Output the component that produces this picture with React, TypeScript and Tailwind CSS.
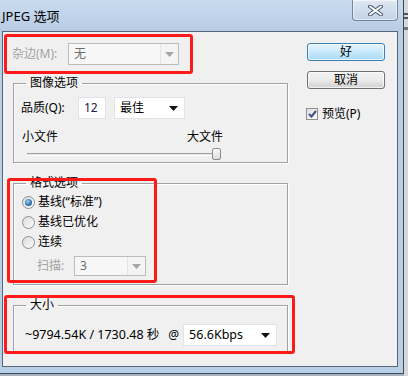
import React from "react";

const font = "font-['Noto_Sans','Noto_Sans_CJK_SC',sans-serif]";

function Arrow({ disabled }: { disabled?: boolean }) {
  return (
    <svg width="9" height="5" viewBox="0 0 9 5">
      <path d="M0 0 L9 0 L4.5 5 Z" fill={disabled ? "#a6a6a6" : "#111"} />
    </svg>
  );
}

function Combo({ value, className, disabled }: { value: string; className: string; disabled?: boolean }) {
  if (disabled) {
    return (
      <div className={`flex items-stretch border border-[#bcbcbc] bg-[#f4f4f4] ${className}`}>
        <div className="flex-1 flex items-center pl-[5px] text-[#6d6d6d] border-r border-[#e4e4e4] bg-[#f7f7f7]">{value}</div>
        <div className="w-[17px] flex items-center justify-center">
          <Arrow disabled />
        </div>
      </div>
    );
  }
  return (
    <div className={`flex items-center justify-between border border-[#e2e3ea] bg-white pl-[5px] pr-[6px] ${className}`}>
      <span>{value}</span>
      <Arrow />
    </div>
  );
}

function Radio({ checked, label }: { checked?: boolean; label: string }) {
  return (
    <div className="flex items-center h-[20px] gap-[3px]">
      <div className="w-[13px] h-[13px] rounded-full border border-[#8f8f8f] bg-gradient-to-br from-[#dcdcdc] to-[#fbfbfb] flex items-center justify-center">
        {checked && (
          <div className="w-[7px] h-[7px] rounded-full bg-[radial-gradient(circle_at_40%_35%,#9fd3f5,#2a6fa8_60%,#1b4f7d)]" />
        )}
      </div>
      <span>{label}</span>
    </div>
  );
}

function Group({ title, className, children }: { title: string; className: string; children: React.ReactNode }) {
  return (
    <fieldset className={`ml-[10px] w-[275px] border border-[#a0a0a0] shadow-[inset_1px_1px_0_#fff,1px_1px_0_#fff] ${className}`}>
      <legend className="ml-[12px] px-[4px] leading-[16px]">{title}</legend>
      {children}
    </fieldset>
  );
}

export default function App() {
  return (
    <div className={`relative w-[408px] h-[376px] overflow-hidden bg-[#a9b3c0] text-[12px] text-black ${font}`}>
      <div className="flex">
        {/* window */}
        <div className="w-[404px] h-[374px] flex flex-col border-r border-b border-[#3d4a5a] bg-[#b9cfe6]">
          <div className="h-[31px] flex justify-between bg-gradient-to-b from-[#c9dbef] to-[#b8cde4]">
            <span className="pl-[2px] pt-[7px] leading-[18px] text-[13px] text-black">JPEG 选项</span>
            <div className="mr-[5px] w-[46px] h-[21px] border border-t-0 border-[#6f84a0] rounded-b-[4px] bg-gradient-to-b from-[#dfe8f3] to-[#c3d3e6] flex items-center justify-center shadow-[inset_0_0_0_1px_rgba(255,255,255,0.6)]">
              <svg width="15" height="11" viewBox="0 0 15 11">
                <path d="M2 1.5 L13 9.5 M13 1.5 L2 9.5" stroke="#4c5b70" strokeWidth="4" strokeLinecap="round" />
                <path d="M2 1.5 L13 9.5 M13 1.5 L2 9.5" stroke="#fff" strokeWidth="2" strokeLinecap="round" />
              </svg>
            </div>
          </div>
          <div className="flex-1 flex pl-[2px] pr-[5px] pb-[6px]">
            <div className="flex-1 flex border border-[#56667a] bg-[#f0f0f0]">
              {/* left column */}
              <div className="w-[292px] flex flex-col">
                <div className="mt-[11px] flex items-center pl-[9px]">
                  <span className="w-[56px] text-[#a3a3a3]">杂边(M):</span>
                  <Combo value="无" disabled className="w-[111px] h-[22px]" />
                </div>

                <Group title="图像选项" className="mt-[10px] h-[88px]">
                  <div className="flex flex-col pl-[7px]">
                    <div className="mt-[6px] flex items-center">
                      <span className="w-[57px]">品质(Q):</span>
                      <div className="w-[28px] h-[22px] border border-[#e2e3ea] bg-white flex items-center pl-[5px] text-[#20204a]">12</div>
                      <Combo value="最佳" className="ml-[8px] w-[71px] h-[22px]" />
                    </div>
                    <div className="mt-[11px] flex justify-between w-[202px] pl-[1px] leading-[14px]">
                      <span>小文件</span>
                      <span>大文件</span>
                    </div>
                    <div className="relative ml-[6px] mt-[4px] w-[195px] h-[12px]">
                      <div className="absolute left-0 top-[5px] w-[190px] h-[3px] border-t border-[#a0a0a0] border-b border-b-white bg-[#e4e4e4]" />
                      <div className="absolute left-[185px] top-0 w-[9px] h-[12px] rounded-[2px] border border-[#8c8c8c] bg-gradient-to-b from-[#fafafa] to-[#dcdcdc]" />
                    </div>
                  </div>
                </Group>

                <Group title="格式选项" className="mt-[12px] h-[110px]">
                  <div className="flex flex-col pl-[8px] pt-[1px]">
                    <Radio checked label="基线(“标准”)" />
                    <Radio label="基线已优化" />
                    <Radio label="连续" />
                    <div className="mt-[4px] flex items-center pl-[15px]">
                      <span className="w-[37px] text-[#a3a3a3]">扫描:</span>
                      <Combo value="3" disabled className="w-[72px] h-[20px]" />
                    </div>
                  </div>
                </Group>

                <Group title="大小" className="mt-[12px] h-[56px]">
                  <div className="flex items-center pl-[11px] pt-[11px]">
                    <span className="text-[12.5px]">~9794.54K / 1730.48 秒</span>
                    <span className="ml-[9px]">@</span>
                    <Combo value="56.6Kbps" className="ml-[4px] w-[94px] h-[22px] text-[12.5px]" />
                  </div>
                </Group>
              </div>

              {/* right column */}
              <div className="flex flex-col pl-[12px]">
                <div className="mt-[11px] w-[78px] h-[18px] rounded-[3px] border border-[#3c7fb1] bg-gradient-to-b from-[#eaf6fd] via-[#c6e8fb] to-[#a9daf6] flex items-center justify-center leading-none shadow-[inset_0_0_0_1px_rgba(255,255,255,0.7)]">
                  好
                </div>
                <div className="mt-[10px] w-[78px] h-[18px] rounded-[3px] border border-[#707070] bg-gradient-to-b from-[#f2f2f2] via-[#ebebeb] to-[#d0d0d0] flex items-center justify-center leading-none shadow-[inset_0_0_0_1px_rgba(255,255,255,0.7)]">
                  取消
                </div>
                <div className="mt-[16px] -ml-[1px] flex items-center gap-[4px]">
                  <div className="w-[12px] h-[12px] border border-[#8f8f8f] bg-gradient-to-br from-[#dedede] to-[#fafafa] flex items-center justify-center">
                    <svg width="9" height="8" viewBox="0 0 9 8">
                      <path d="M1 4 L3.5 6.5 L8 1" stroke="#3a4f8a" strokeWidth="2" fill="none" />
                    </svg>
                  </div>
                  <span>预览(P)</span>
                </div>
              </div>
            </div>
          </div>
        </div>
        {/* outside strip */}
        <div className="w-[4px] h-[376px] bg-[#d8d8d8] flex flex-col">
          <div className="mt-[13px] h-[2px] bg-[#555]" />
          <div className="mt-[2px] h-[2px] bg-[#555]" />
          <div className="mt-[8px] h-[3px] bg-[#777]" />
        </div>
      </div>

      {/* red annotation boxes */}
      <div className="absolute left-[4px] top-[34px] w-[189px] h-[40px] border-[3px] border-[#ff1a1a] rounded-[3px]" />
      <div className="absolute left-[7px] top-[178px] w-[150px] h-[105px] border-[3px] border-[#ff1a1a] rounded-[3px]" />
      <div className="absolute left-[4px] top-[295px] w-[291px] h-[59px] border-[3px] border-[#ff1a1a] rounded-[3px]" />
    </div>
  );
}
